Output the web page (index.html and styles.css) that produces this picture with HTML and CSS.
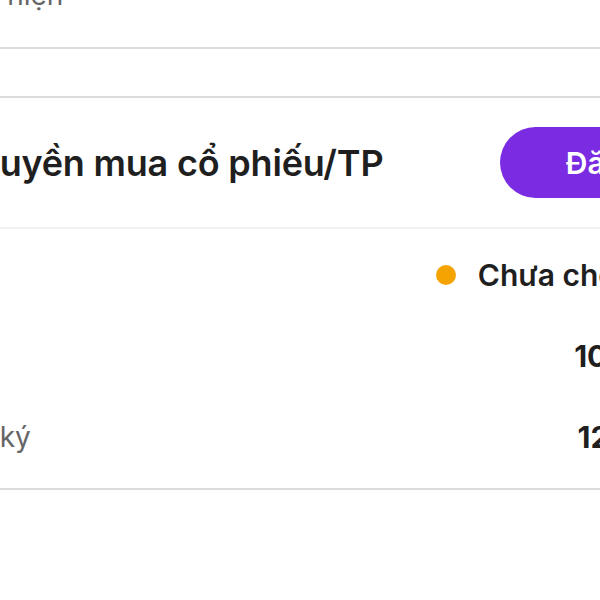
FILE: index.html
```html
<!DOCTYPE html>
<html lang="vi">
<head>
<meta charset="utf-8">
<title>Quyền mua cổ phiếu/TP</title>
<link rel="stylesheet" href="styles.css">
</head>
<body>
<div class="viewport">
  <div class="page">
    <div class="prev-section">
      <span class="prev-label">Ngày thực hiện</span>
    </div>
    <div class="gap"></div>
    <section class="card">
      <header class="card-head">
        <span class="card-icon" aria-hidden="true">
          <svg viewBox="0 0 24 24" width="80" height="80"><circle cx="12" cy="12" r="11" fill="#efe6fc"/><path d="M8 12h8M12 8v8" stroke="#7b2be2" stroke-width="2" stroke-linecap="round"/></svg>
        </span>
        <h2 class="card-title">Quyền mua cổ phiếu/TP</h2>
        <button class="btn-primary" type="button">Đăng ký</button>
      </header>
      <div class="rows">
        <div class="row">
          <span class="label">Trạng thái</span>
          <span class="value status"><span class="dot"></span>Chưa chốt quyền</span>
        </div>
        <div class="row">
          <span class="label">Số lượng</span>
          <span class="value">10.000 CP</span>
        </div>
        <div class="row">
          <span class="label">Ngày đăng ký</span>
          <span class="value">12.6.2024</span>
        </div>
      </div>
    </section>
  </div>
</div>
</body>
</html>
```

FILE: styles.css
```css
* { box-sizing: border-box; }
html, body { margin: 0; padding: 0; background: #fff; }
body { font-family: Inter, "Noto Sans", sans-serif; color: #1f1f1f; }

.viewport {
  width: 600px;
  height: 600px;
  overflow: hidden;
}

.page {
  width: 902px;
  margin-left: -152px;
}

.prev-section {
  margin-top: -22px;
  padding-bottom: 35px;
  border-bottom: 2px solid #dcdcdc;
}
.prev-label {
  display: block;
  font-size: 28px;
  line-height: 34px;
  color: #666;
  padding-left: 15px;
  white-space: nowrap;
}

.gap { height: 47px; }

.card {
  border-top: 2px solid #dcdcdc;
  border-bottom: 2px solid #dcdcdc;
}

.card-head {
  display: flex;
  align-items: center;
  gap: 44px;
  height: 131px;
  border-bottom: 2px solid #f1f1f1;
}
.card-icon {
  display: flex;
  flex: none;
}
.card-title {
  margin: 0;
  font-size: 36px;
  font-weight: 600;
  letter-spacing: -0.2px;
  color: #1f1f1f;
}
.btn-primary {
  margin-left: auto;
  flex: none;
  width: 250px;
  height: 71px;
  border: 0;
  border-radius: 36px;
  background: #7b2be2;
  color: #fff;
  font-family: inherit;
  font-size: 30px;
  font-weight: 600;
  text-align: center;
  padding-left: 6px;
}

.rows { padding: 5px 25px 11px 0; }
.row {
  display: flex;
  align-items: center;
  justify-content: space-between;
  height: 81px;
}
.label {
  font-size: 28px;
  color: #666;
}
.value {
  font-size: 30px;
  font-weight: 700;
  color: #1f1f1f;
  display: flex;
  align-items: center;
}
.status { font-weight: 600; }
.dot {
  width: 20px;
  height: 20px;
  border-radius: 50%;
  background: #f5a300;
  margin-right: 22px;
}
```
